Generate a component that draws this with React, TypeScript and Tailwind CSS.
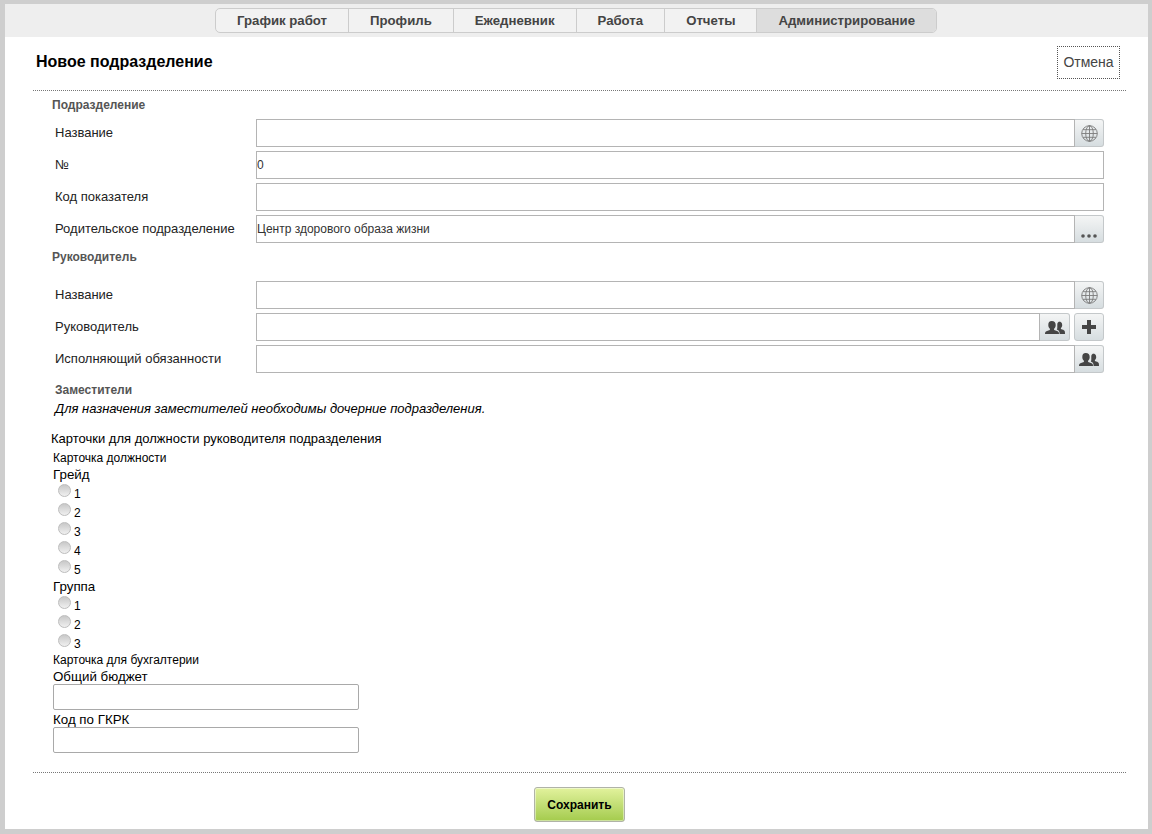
import React from 'react';

const tabs = ['График работ', 'Профиль', 'Ежедневник', 'Работа', 'Отчеты', 'Администрирование'];

const GlobeIcon: React.FC = () => (
  <svg width="17" height="17" viewBox="0 0 17 17" fill="none" stroke="#7a7a7a" strokeWidth="0.9">
    <circle cx="8.500" cy="8.500" r="7.800" />
    <ellipse cx="8.500" cy="8.500" rx="3.800" ry="7.800" />
    <path d="M8.500 .7v15.600M.7 8.500h15.600M2 4.700h13M2 12.300h13" />
  </svg>
);

const UsersIcon: React.FC = () => (
  <svg width="20" height="13" viewBox="0 0 20 13" fill="#454545">
    <path d="M14 .6c2 0 3.200 1.400 3.200 3.300 0 1.300-.5 2.500-1.300 3.100v1c1.600.5 3.400 1.100 3.800 2.100.2.600.3 1.500.3 2.900h-5.400c0-1.800-.3-3-1.500-3.700l-1.300-.8c.3-.6.500-1.300.5-2.100V3.300c0-1 .3-1.700.9-2.100.3-.4.800-.6 1.300-.6z" />
    <path d="M6.800 0c2.500 0 3.900 1.700 3.900 3.900 0 1.600-.7 3-1.600 3.800v1.200c2 .6 4.100 1.200 4.600 2.300.2.400.3 1 .3 1.800H0c0-.8.100-1.400.3-1.800.5-1.100 2.600-1.700 4.600-2.300V7.700C4 6.900 3.300 5.500 3.300 3.900 3.300 1.700 4.300 0 6.800 0z" />
  </svg>
);

const PlusIcon: React.FC = () => (
  <svg width="14" height="14" viewBox="0 0 14 14" fill="#454545">
    <path d="M5 0h4v5h5v4H9v5H5V9H0V5h5z" />
  </svg>
);

const DotsIcon: React.FC = () => (
  <svg width="16" height="4" viewBox="0 0 16 4" fill="#555">
    <circle cx="2" cy="2" r="1.800" />
    <circle cx="8" cy="2" r="1.800" />
    <circle cx="14" cy="2" r="1.800" />
  </svg>
);

const AddonButton: React.FC<{ children: React.ReactNode; className?: string }> = ({ children, className }) => (
  <button className={`flex h-[28px] w-[29px] shrink-0 items-center justify-center border border-[#c4c8ca] bg-gradient-to-b from-[#f4f5f5] to-[#d6dde0] ${className ?? ''}`}>
    {children}
  </button>
);

const FormRow: React.FC<{ label: string; value?: string; children?: React.ReactNode }> = ({ label, value, children }) => (
  <div className="flex h-[28px] items-center">
    <label className="w-[203px] shrink-0 pl-[2px] text-[13px] text-[#222]">{label}</label>
    <input
      readOnly
      value={value ?? ''}
      className="h-[28px] min-w-0 flex-1 border border-[#b4b4b4] bg-white text-[12px] text-[#333] outline-none"
    />
    {children}
  </div>
);

const SectionTitle: React.FC<{ children: React.ReactNode; className?: string }> = ({ children, className }) => (
  <div className={`text-[12px] font-bold leading-[14px] text-[#555] ${className ?? ''}`}>{children}</div>
);

const RadioRow: React.FC<{ label: string }> = ({ label }) => (
  <div className="flex h-[19px] items-start pl-[5px]">
    <input type="radio" className="mt-0 h-[13px] w-[13px] appearance-none rounded-full border border-[#bdbdbd] bg-gradient-to-b from-[#c8c8c8] to-[#f0f0f0]" />
    <span className="ml-[3px] mt-[3px] text-[12px] leading-[14px] text-black">{label}</span>
  </div>
);

export default function App() {
  return (
    <div className="h-[834px] w-[1152px] bg-[#cecece] pb-[5px] pl-[5px] pr-[4px] pt-[4px] font-['Liberation_Sans',Arial,sans-serif]">
      <div className="flex h-full flex-col bg-white">
        {/* Top nav */}
        <div className="flex h-[33px] justify-center bg-[#eeeeee] pr-[1px] pt-[4px]">
          <div className="flex h-[25px] overflow-hidden rounded-[5px] border border-[#cccccc] bg-[#f2f2f2]">
            {tabs.map((tab, i) => (
              <div
                key={tab}
                className={`flex items-center px-[21px] text-[13.2px] font-bold text-[#444] ${i > 0 ? 'border-l border-[#cccccc]' : ''} ${i === tabs.length - 1 ? 'bg-[#dddddd]' : ''}`}
              >
                {tab}
              </div>
            ))}
          </div>
        </div>

        <div className="flex flex-1 flex-col pl-[28px] pr-[22px]">
          {/* Header */}
          <div className="flex h-[54px] items-start justify-between border-b border-dotted border-[#777] pl-[3px] pr-[6px]">
            <h1 className="mt-[15px] text-[16px] font-bold leading-[20px] text-black">Новое подразделение</h1>
            <button className="mt-[9px] h-[33px] w-[63px] border border-dotted border-[#555] text-[14px] text-[#444]">Отмена</button>
          </div>

          {/* Unit */}
          <div className="flex flex-col pl-[19px] pr-[22px]">
            <SectionTitle className="mt-[7px]">Подразделение</SectionTitle>
            <div className="mt-[7px] flex flex-col gap-[4px] pl-px">
              <FormRow label="Название"><AddonButton className="rounded-r-[3px] border-l-0"><GlobeIcon /></AddonButton></FormRow>
              <FormRow label="№" value="0" />
              <FormRow label="Код показателя" />
              <FormRow label="Родительское подразделение" value="Центр здорового образа жизни">
                <AddonButton className="items-end rounded-r-[3px] border-l-0 pb-[4px]"><DotsIcon /></AddonButton>
              </FormRow>
            </div>

            <SectionTitle className="mt-[7px]">Руководитель</SectionTitle>
            <div className="mt-[17px] flex flex-col gap-[4px] pl-px">
              <FormRow label="Название"><AddonButton className="rounded-r-[3px] border-l-0"><GlobeIcon /></AddonButton></FormRow>
              <FormRow label="Руководитель">
                <AddonButton className="w-[30px] rounded-r-[3px] border-l-0"><UsersIcon /></AddonButton>
                <AddonButton className="ml-[4px] w-[30px] rounded-[3px]"><PlusIcon /></AddonButton>
              </FormRow>
              <FormRow label="Исполняющий обязанности"><AddonButton className="rounded-r-[3px] border-l-0"><UsersIcon /></AddonButton></FormRow>
            </div>

            <SectionTitle className="ml-[3px] mt-[10px]">Заместители</SectionTitle>
            <p className="ml-[3px] mt-[4px] text-[13px] italic leading-[16px] text-black">Для назначения заместителей необходимы дочерние подразделения.</p>
          </div>

          {/* Cards */}
          <div className="flex flex-col pl-[20px]">
            <div className="ml-[-2px] mt-[15px] text-[13px] leading-[14px] text-black">Карточки для должности руководителя подразделения</div>
            <div className="mt-[5px] text-[12px] leading-[14px] text-black">Карточка должности</div>
            <div className="mt-[2px] text-[13.33px] leading-[15px] text-black">Грейд</div>
            <div className="mt-[2px] flex flex-col">
              {['1', '2', '3', '4', '5'].map((n) => <RadioRow key={n} label={n} />)}
            </div>
            <div className="text-[13.33px] leading-[15px] text-black">Группа</div>
            <div className="mt-[2px] flex flex-col">
              {['1', '2', '3'].map((n) => <RadioRow key={n} label={n} />)}
            </div>
            <div className="text-[12px] leading-[14px] text-black">Карточка для бухгалтерии</div>
            <div className="mt-[2px] text-[13.33px] leading-[15px] text-black">Общий бюджет</div>
            <input readOnly className="h-[26px] w-[306px] rounded-[2px] border border-[#a9a9a9] bg-white outline-none" />
            <div className="mt-[2px] text-[13.33px] leading-[15px] text-black">Код по ГКРК</div>
            <input readOnly className="h-[26px] w-[306px] rounded-[2px] border border-[#a9a9a9] bg-white outline-none" />
          </div>

          {/* Footer */}
          <div className="mt-[19px] flex justify-center border-t border-dotted border-[#777] pt-[14px]">
            <button className="h-[35px] w-[91px] rounded-[3px] border border-[#b0b3a8] bg-gradient-to-b from-[#e2f29c] to-[#a4cb4c] text-[12px] font-bold text-black shadow-[inset_0_0_0_1px_rgba(255,255,255,0.45)]">Сохранить</button>
          </div>
        </div>
      </div>
    </div>
  );
}
